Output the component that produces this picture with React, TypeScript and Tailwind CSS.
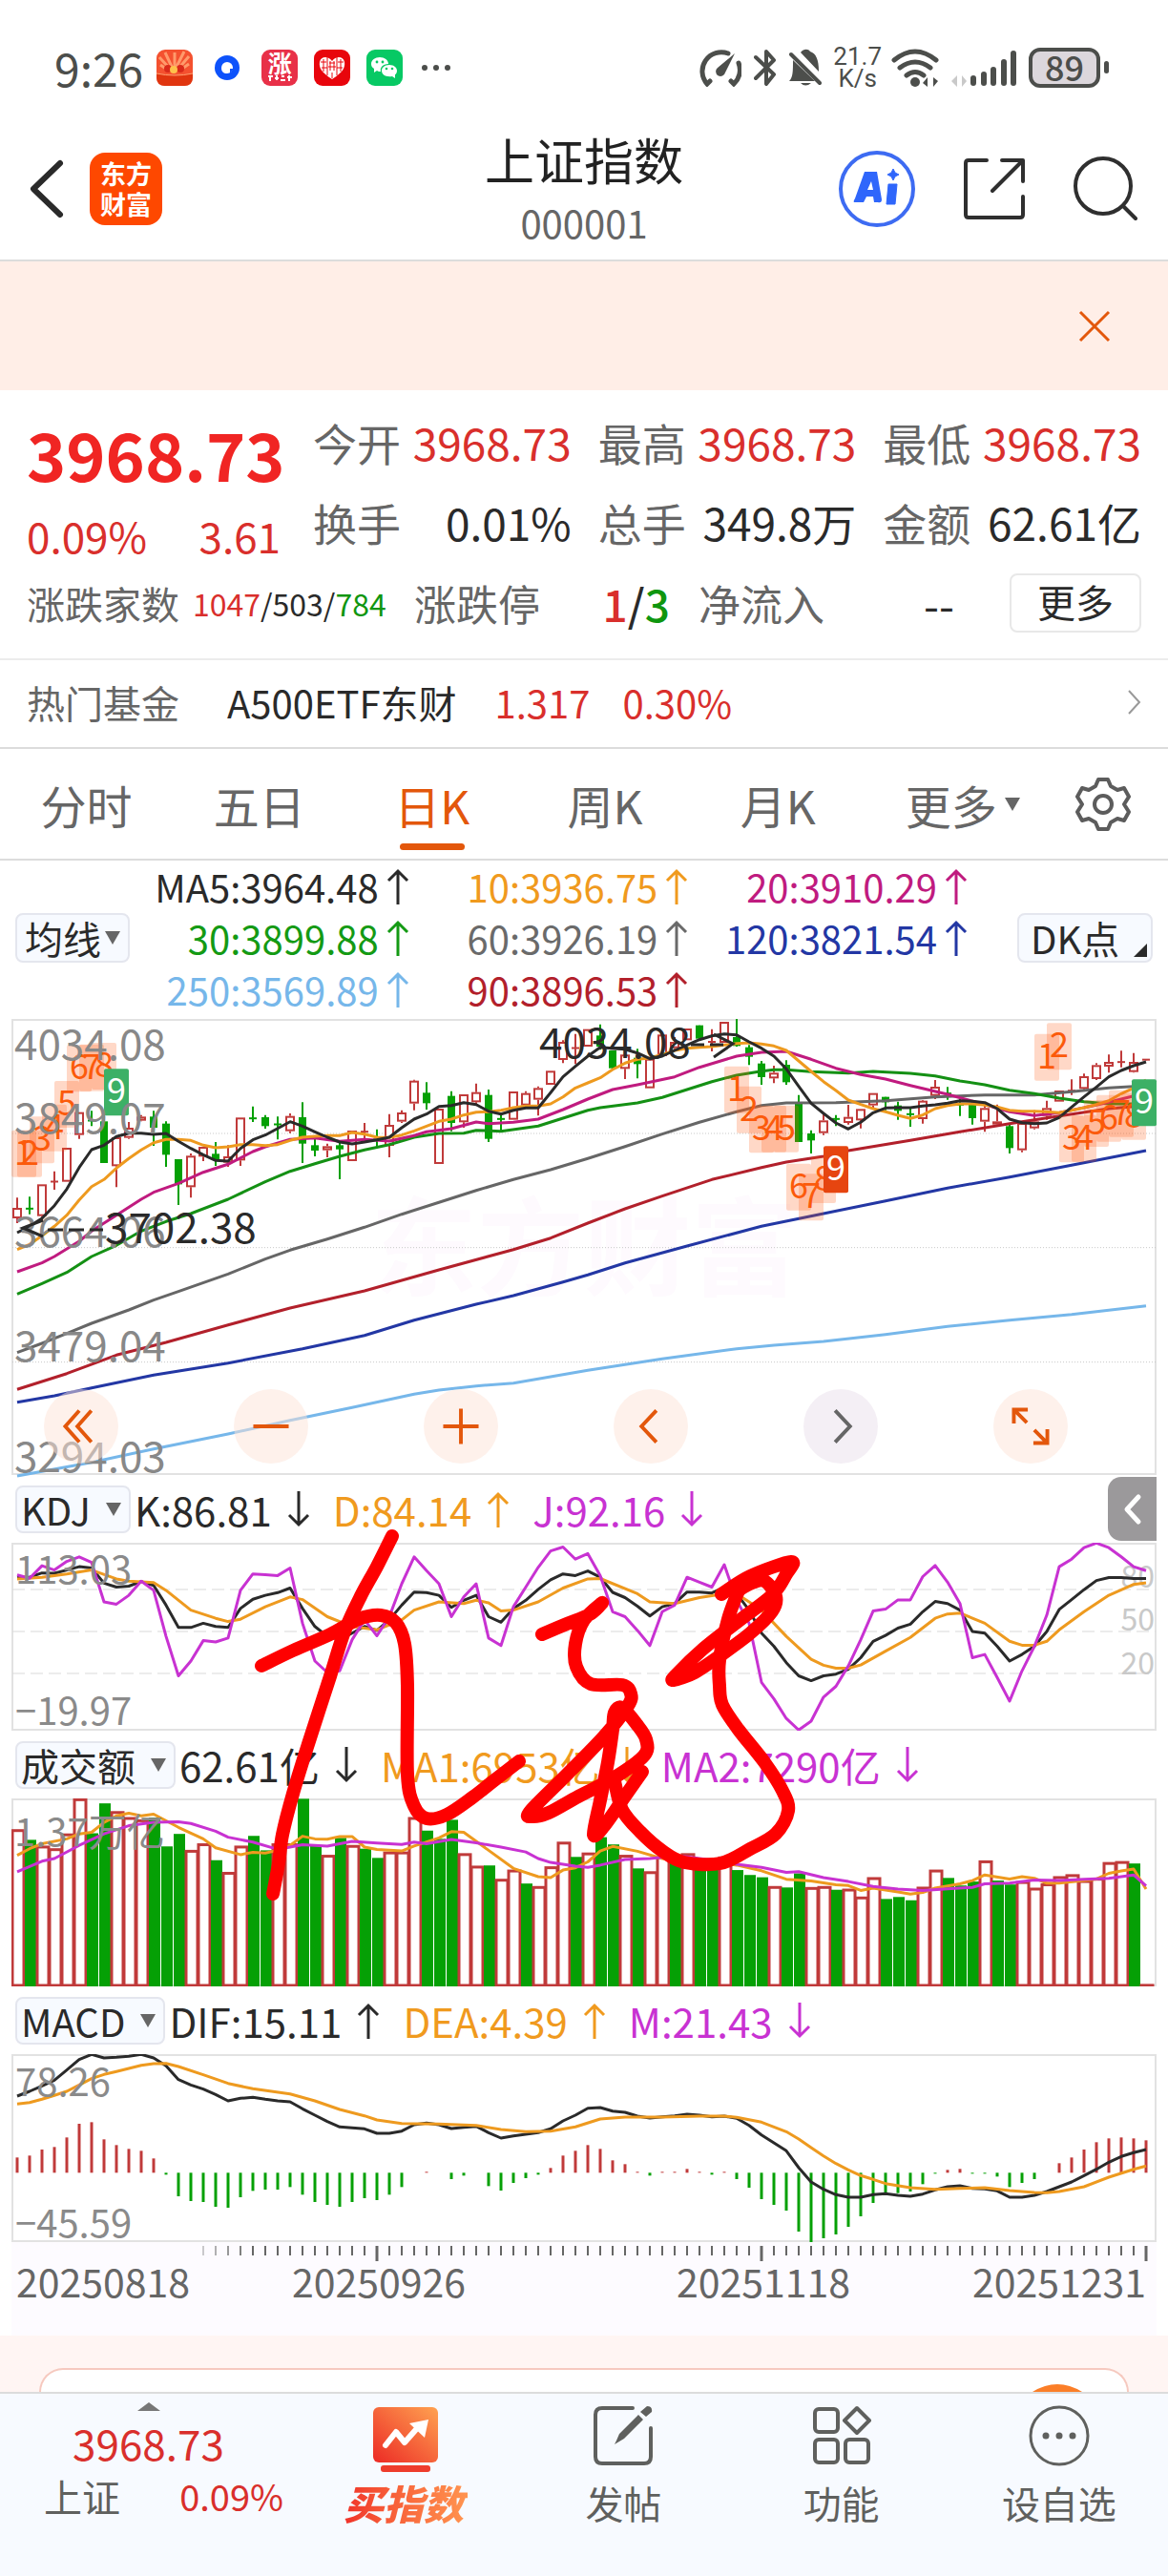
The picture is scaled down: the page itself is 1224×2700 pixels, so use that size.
import React from "react";

type Pt = [number, number];
type Series = number[];

const UP = "#c03a3a";
const DOWN = "#05a005";
const INK = "#2a2a2a";
const ORANGE = "#ee9a1f";
const VIOLET = "#c832d2";

const xAt = (i: number) => 18 + 13 * i;

// Sparse series: index, level, index, level, ...
const pathOf = (s: Series, y: (v: number) => number) => {
  let d = "";
  for (let k = 0; k < s.length; k += 2) d += (k ? "L" : "M") + xAt(s[k]) + " " + y(s[k + 1]).toFixed(1);
  return d;
};
// Dense series: one level for each trading day
const densePath = (s: Series, y: (v: number) => number) =>
  s.map((v, i) => (i ? "L" : "M") + xAt(i) + " " + y(v).toFixed(1)).join("");

const smooth = (p: Pt[]) => {
  let d = `M${p[0][0]} ${p[0][1]}`;
  for (let i = 0; i < p.length - 1; i++) {
    const a = p[Math.max(0, i - 1)], b = p[i], c = p[i + 1], e = p[Math.min(p.length - 1, i + 2)];
    d += `C${b[0] + (c[0] - a[0]) / 6} ${b[1] + (c[1] - a[1]) / 6} ${c[0] - (e[0] - b[0]) / 6} ${c[1] - (e[1] - b[1]) / 6} ${c[0]} ${c[1]}`;
  }
  return d;
};

// [rising, body top, body bottom, high, low]
const candles: [number, number, number, number, number][] = [
  [1, 617, 650, 585, 665], [0, 617, 622, 582, 637], [1, 543, 643, 543, 660], [1, 532, 537, 502, 560], [1, 428, 535, 428, 535],
  [1, 316, 388, 316, 400], [0, 340, 345, 312, 360], [0, 345, 476, 310, 476], [1, 395, 486, 395, 552], [1, 365, 397, 347, 400],
  [1, 330, 343, 325, 345], [0, 330, 365, 312, 422], [0, 352, 450, 345, 488], [0, 464, 543, 464, 608], [1, 453, 552, 446, 585],
  [1, 425, 456, 425, 470], [0, 447, 465, 410, 485], [1, 455, 475, 420, 488], [1, 333, 468, 333, 485], [0, 333, 338, 298, 347],
  [0, 332, 360, 325, 368], [0, 352, 357, 330, 402], [1, 328, 376, 320, 382], [0, 332, 415, 285, 476], [0, 420, 437, 400, 455],
  [1, 423, 436, 415, 458], [0, 420, 433, 410, 527], [1, 374, 470, 374, 470], [1, 375, 380, 350, 405], [0, 400, 405, 370, 425],
  [1, 356, 422, 322, 458], [1, 317, 346, 310, 350], [1, 217, 289, 214, 310], [0, 255, 288, 222, 308], [1, 305, 479, 305, 479],
  [0, 265, 350, 250, 376], [1, 260, 348, 260, 365], [1, 253, 285, 226, 295], [0, 262, 400, 245, 410], [0, 335, 340, 320, 380],
  [1, 251, 340, 251, 340], [1, 256, 295, 250, 305], [1, 240, 277, 235, 327], [1, 186, 230, 186, 230], [1, 95, 152, 90, 162],
  [1, 112, 117, 70, 165], [1, 55, 110, 55, 110], [0, 75, 110, 40, 120], [0, 122, 178, 122, 178], [1, 135, 180, 120, 212],
  [0, 145, 165, 117, 210], [1, 148, 241, 148, 241], [1, 72, 140, 72, 140], [1, 95, 115, 80, 125], [1, 53, 90, 53, 90],
  [0, 43, 85, 43, 85], [1, 92, 98, 55, 125], [1, 32, 98, 32, 98], [0, 80, 108, 23, 110], [0, 112, 142, 105, 168],
  [0, 163, 206, 155, 230], [1, 192, 210, 170, 225], [0, 167, 222, 153, 230], [0, 290, 410, 262, 410], [0, 383, 405, 373, 446],
  [1, 342, 382, 322, 388], [0, 335, 340, 325, 360], [1, 331, 350, 293, 355], [1, 306, 342, 306, 367], [1, 256, 295, 256, 305],
  [0, 268, 285, 268, 310], [0, 295, 312, 283, 340], [0, 320, 325, 305, 362], [1, 280, 338, 278, 352], [1, 236, 265, 215, 275],
  [0, 255, 260, 237, 277], [0, 290, 295, 275, 328], [0, 292, 335, 285, 355], [1, 303, 346, 295, 378], [1, 345, 355, 292, 362],
  [0, 360, 429, 355, 446], [1, 350, 436, 350, 442], [1, 345, 367, 310, 370], [1, 303, 328, 280, 340], [1, 248, 283, 248, 283],
  [1, 246, 251, 213, 262], [1, 203, 243, 195, 250], [1, 168, 212, 162, 215], [1, 158, 173, 135, 192], [1, 156, 161, 123, 175],
  [1, 158, 190, 130, 192], [1, 149, 153, 149, 153],
];

const ma5 = [695, 675, 650, 610, 558, 490, 434, 420, 393, 382, 382, 386, 383, 408, 430, 450, 468, 470, 430, 403, 388, 367, 346, 360, 378, 395, 410, 416, 410, 403, 395, 365, 338, 322, 298, 295, 286, 292, 313, 322, 310, 303, 303, 255, 205, 172, 140, 112, 115, 118, 130, 148, 140, 122, 105, 88, 76, 70, 73, 95, 115, 140, 180, 235, 288, 320, 350, 369, 348, 318, 303, 302, 302, 297, 293, 288, 280, 282, 286, 305, 338, 349, 352, 350, 333, 300, 268, 237, 205, 185, 170, 158];
const ma10 = [748, 732, 705, 675, 640, 592, 550, 528, 492, 462, 435, 412, 402, 402, 405, 420, 428, 425, 418, 418, 421, 418, 405, 395, 392, 390, 390, 380, 385, 395, 396, 388, 375, 360, 345, 338, 325, 316, 315, 310, 302, 297, 297, 290, 268, 240, 224, 208, 182, 162, 150, 146, 135, 122, 115, 112, 110, 105, 100, 98, 102, 108, 122, 155, 188, 220, 248, 278, 292, 305, 315, 326, 336, 325, 305, 295, 290, 290, 294, 300, 310, 313, 313, 315, 318, 310, 302, 292, 280, 258, 240, 215];

const maLines: { color: string; data: Series }[] = [
  { color: "#76b7ea", data: [0, 1460, 6, 1417, 11, 1375, 17, 1328, 22, 1285, 27, 1245, 32, 1203, 34, 1190, 37, 1177, 40, 1168, 46, 1128, 52, 1092, 58, 1060, 61, 1049, 65, 1037, 70, 1015, 75, 990, 80, 970, 85, 952, 91, 925] },
  { color: "#2337a4", data: [0, 1228, 3, 1208, 6, 1183, 11, 1143, 17, 1105, 23, 1060, 28, 1018, 32, 970, 37, 920, 40, 893, 44, 850, 46, 828, 49, 790, 54, 737, 60, 675, 65, 635, 70, 595, 75, 555, 80, 520, 85, 483, 91, 437] },
  { color: "#b2202b", data: [0, 1188, 4, 1138, 8, 1080, 12, 1040, 17, 985, 22, 932, 28, 878, 34, 812, 40, 748, 43, 712, 46, 665, 49, 620, 52, 580, 56, 528, 60, 490, 62, 473, 65, 455, 67, 437, 72, 405, 76, 378, 80, 352, 84, 328, 88, 305, 91, 295] },
  { color: "#666", data: [0, 1072, 2, 1043, 4, 1012, 6, 980, 9, 938, 11, 907, 13, 880, 17, 825, 20, 778, 22, 750, 25, 715, 28, 678, 31, 637, 34, 600, 37, 562, 40, 528, 43, 497, 46, 462, 49, 424, 52, 385, 55, 348, 58, 315, 60, 295, 62, 287, 66, 286, 70, 280, 74, 268, 78, 262, 82, 262, 85, 252, 88, 240, 91, 233] },
  { color: "#149014", data: [0, 888, 2, 855, 4, 820, 6, 770, 8, 735, 10, 690, 12, 660, 14, 635, 17, 590, 20, 535, 22, 502, 24, 478, 26, 455, 28, 435, 30, 418, 32, 395, 34, 383, 36, 382, 37, 373, 39, 376, 42, 360, 44, 335, 46, 310, 47, 302, 50, 287, 52, 270, 54, 245, 56, 220, 58, 200, 60, 187, 61, 183, 62, 183, 64, 189, 67, 193, 69, 188, 72, 194, 74, 202, 76, 218, 78, 230, 80, 247, 82, 258, 84, 272, 86, 283, 88, 290, 91, 290] },
  { color: "#c01b7f", data: [0, 818, 2, 790, 3, 770, 5, 722, 6, 690, 8, 640, 10, 590, 11, 568, 13, 540, 15, 505, 17, 480, 19, 440, 20, 425, 22, 402, 24, 397, 26, 408, 28, 402, 30, 407, 32, 390, 33, 378, 35, 368, 37, 347, 38, 352, 40, 348, 42, 338, 44, 308, 46, 275, 48, 245, 50, 230, 53, 205, 55, 175, 58, 140, 60, 128, 62, 125, 64, 150, 66, 178, 68, 198, 70, 212, 72, 232, 75, 260, 78, 292, 80, 315, 82, 327, 84, 318, 86, 302, 88, 285, 90, 265, 91, 258] },
];

// [day, digit, top level, kind]
const marks: [number, string, number, string][] = [
  [0, "1", 373, "n"], [1, "2", 373, "n"], [2, "3", 330, "n"], [3, "4", 292, "n"], [4, "5", 218, "n"], [5, "6", 105, "n"], [6, "7", 103, "n"], [7, "8", 98, "n"], [8, "9", 180, "g"],
  [58, "1", 172, "n"], [59, "2", 235, "n"], [60, "3", 297, "n"], [61, "4", 295, "n"], [62, "5", 295, "n"], [63, "6", 478, "n"], [64, "7", 510, "n"], [65, "8", 455, "n"], [66, "9", 423, "r"],
  [83, "1", 70, "n"], [84, "2", 36, "n"], [85, "3", 327, "n"], [86, "4", 325, "n"], [87, "5", 278, "n"], [88, "6", 262, "n"], [89, "7", 247, "n"], [90, "8", 256, "n"], [91, "9", 213, "g"],
];

const kLine = [300, 300, 287, 288, 278, 268, 272, 318, 330, 327, 313, 325, 385, 453, 453, 440, 450, 453, 395, 367, 355, 347, 333, 395, 450, 480, 490, 470, 450, 462, 430, 385, 345, 347, 355, 392, 370, 355, 420, 437, 395, 370, 337, 308, 290, 295, 281, 300, 346, 362, 388, 418, 390, 380, 345, 345, 348, 330, 350, 400, 470, 510, 560, 600, 615, 600, 595, 580, 545, 495, 477, 455, 443, 405, 374, 380, 400, 465, 470, 510, 555, 535, 510, 465, 398, 368, 338, 310, 301, 301, 304, 304];
const dLine = [0, 305, 2, 300, 4, 290, 6, 278, 8, 305, 9, 312, 11, 316, 12, 340, 14, 400, 16, 425, 17, 435, 18, 428, 20, 390, 22, 360, 23, 368, 25, 420, 27, 450, 29, 460, 30, 445, 31, 430, 32, 400, 34, 375, 36, 380, 37, 370, 38, 378, 39, 403, 40, 400, 42, 375, 44, 333, 46, 305, 47, 304, 50, 350, 51, 375, 53, 380, 55, 362, 57, 350, 58, 350, 60, 400, 62, 480, 64, 550, 65, 568, 66, 577, 67, 577, 68, 567, 70, 525, 72, 483, 74, 425, 75, 412, 76, 409, 78, 440, 80, 495, 81, 507, 82, 507, 83, 495, 84, 460, 86, 405, 88, 355, 90, 322, 91, 317];
const jLine = [293, 303, 265, 278, 252, 238, 255, 375, 382, 355, 312, 340, 480, 600, 555, 493, 497, 485, 340, 290, 292, 295, 272, 440, 555, 590, 585, 490, 430, 478, 420, 320, 238, 280, 320, 420, 360, 320, 485, 508, 390, 330, 270, 220, 208, 245, 228, 295, 405, 420, 462, 508, 405, 385, 300, 315, 330, 262, 370, 440, 620, 670, 730, 765, 738, 665, 632, 570, 490, 403, 397, 369, 369, 298, 264, 315, 380, 545, 535, 605, 677, 585, 510, 415, 268, 245, 210, 196, 210, 238, 268, 280];

// Negative levels are falling days
const volume = [1067, -1098, 1117, 1125, 1080, 973, -1078, -987, 1012, 1030, 1037, -1030, -1118, -1080, 1130, 1110, -1160, 1197, 1117, -1086, -1130, 1110, 1110, -973, -1115, 1145, -1092, 1115, -1125, -1153, 1135, 1135, 1030, -1070, -1095, -1037, 1140, 1178, -1176, 1218, 1190, -1231, 1240, 1180, 1105, -1150, 1138, -1090, -1112, 1145, -1185, 1195, 1150, -1165, 1140, -1180, -1180, 1150, -1190, -1205, -1212, 1240, -1243, -1200, 1243, 1240, -1250, 1248, 1272, 1213, -1278, -1272, -1282, 1242, 1190, -1214, -1237, -1225, 1162, -1222, -1234, 1225, 1245, 1232, 1210, 1204, 1222, 1215, 1167, 1164, -1170, 1538];
const volMa1 = [0, 1145, 1, 1125, 2, 1110, 4, 1095, 5, 1080, 6, 1075, 7, 1045, 8, 1025, 9, 1017, 10, 1025, 11, 1020, 13, 1060, 15, 1095, 16, 1122, 18, 1143, 19, 1136, 20, 1138, 21, 1130, 22, 1115, 23, 1087, 24, 1095, 25, 1096, 26, 1088, 27, 1088, 28, 1120, 29, 1127, 31, 1132, 32, 1117, 34, 1092, 35, 1073, 36, 1075, 38, 1130, 40, 1185, 42, 1210, 43, 1213, 44, 1190, 45, 1183, 46, 1165, 47, 1132, 48, 1118, 50, 1133, 52, 1155, 54, 1165, 56, 1165, 58, 1175, 60, 1192, 62, 1218, 64, 1223, 66, 1235, 67, 1237, 68, 1252, 69, 1245, 71, 1257, 72, 1263, 73, 1258, 74, 1245, 76, 1232, 77, 1222, 78, 1205, 80, 1217, 81, 1210, 82, 1215, 83, 1230, 84, 1230, 86, 1222, 87, 1217, 88, 1200, 89, 1193, 90, 1187, 91, 1248];
const volMa2 = [0, 1195, 2, 1163, 3, 1155, 5, 1115, 7, 1080, 9, 1055, 11, 1045, 13, 1043, 14, 1048, 16, 1072, 17, 1090, 19, 1105, 21, 1127, 23, 1113, 25, 1117, 27, 1103, 29, 1108, 31, 1112, 32, 1105, 33, 1110, 35, 1097, 37, 1107, 39, 1120, 41, 1135, 42, 1155, 43, 1167, 45, 1178, 46, 1182, 47, 1175, 49, 1158, 51, 1155, 53, 1147, 54, 1150, 56, 1160, 58, 1172, 60, 1182, 62, 1197, 63, 1195, 65, 1213, 67, 1225, 69, 1240, 71, 1248, 73, 1252, 75, 1247, 77, 1243, 78, 1232, 80, 1230, 82, 1220, 84, 1222, 86, 1218, 88, 1215, 90, 1205, 91, 1238];

const dif = [350, 335, 318, 300, 268, 235, 219, 230, 228, 225, 219, 230, 255, 298, 315, 328, 345, 365, 357, 354, 360, 365, 368, 390, 410, 430, 447, 450, 453, 467, 467, 460, 440, 435, 440, 452, 448, 445, 465, 482, 475, 470, 465, 453, 428, 410, 388, 386, 397, 401, 413, 419, 415, 412, 407, 410, 415, 413, 420, 442, 472, 497, 522, 575, 620, 643, 660, 668, 668, 660, 657, 662, 665, 658, 645, 635, 632, 640, 642, 648, 668, 668, 662, 650, 635, 620, 600, 580, 558, 540, 528, 518];
const dea = [0, 375, 1, 370, 2, 360, 3, 348, 4, 335, 5, 315, 6, 295, 7, 282, 8, 273, 9, 263, 10, 253, 11, 248, 12, 247, 13, 257, 15, 283, 17, 310, 19, 327, 22, 343, 24, 365, 26, 392, 28, 412, 29, 425, 31, 436, 34, 438, 37, 442, 39, 455, 41, 462, 43, 460, 45, 447, 47, 422, 49, 416, 52, 416, 55, 413, 57, 413, 58, 417, 60, 432, 62, 462, 63, 485, 64, 512, 65, 538, 66, 562, 67, 582, 68, 600, 69, 612, 70, 625, 72, 638, 74, 643, 76, 640, 78, 638, 80, 647, 82, 653, 83, 654, 84, 650, 86, 635, 88, 605, 90, 580, 91, 570];
const hist = [543, 537, 518, 510, 480, 437, 432, 486, 504, 516, 522, 546, 597, 665, 680, 683, 698, 701, 668, 648, 644, 644, 636, 660, 683, 692, 698, 683, 671, 677, 660, 636, 591, 588, 591, 611, 600, 591, 633, 647, 623, 608, 597, 576, 537, 522, 504, 516, 552, 564, 588, 600, 588, 588, 579, 588, 597, 588, 611, 638, 674, 692, 710, 776, 810, 797, 785, 761, 728, 686, 660, 655, 650, 627, 594, 582, 579, 594, 594, 603, 636, 623, 611, 591, 561, 543, 518, 495, 483, 480, 483, 489];

const strokes: Pt[][] = [
  [[411, 1610], [395, 1642], [378, 1673], [361, 1710], [346, 1757], [323, 1828], [307, 1880], [296, 1923], [292, 1953], [286, 1985]],
  [[274, 1746], [307, 1730], [346, 1713], [376, 1697], [399, 1693], [415, 1701], [424, 1723], [427, 1767], [427, 1860], [434, 1893], [447, 1906], [468, 1902], [495, 1884], [518, 1866], [544, 1846]],
  [[568, 1713], [594, 1702], [618, 1692], [631, 1680], [612, 1698], [603, 1723], [604, 1747], [619, 1765], [652, 1766], [661, 1775], [658, 1788], [633, 1820], [594, 1860], [556, 1898], [557, 1904], [575, 1900], [606, 1883], [644, 1863], [675, 1840], [677, 1823], [667, 1807], [652, 1790], [644, 1795], [642, 1813], [637, 1847], [629, 1887], [622, 1923], [633, 1914], [652, 1887], [673, 1857]],
  [[644, 1867], [652, 1897], [671, 1920], [694, 1940], [717, 1952], [755, 1953], [786, 1938], [813, 1922], [826, 1898], [820, 1877], [801, 1847], [774, 1813], [757, 1787], [754, 1767], [754, 1740], [763, 1697], [774, 1667]],
  [[756, 1671], [786, 1652], [829, 1637], [824, 1650], [809, 1672], [774, 1699], [736, 1729], [709, 1755], [706, 1761], [728, 1753], [755, 1735], [786, 1712], [809, 1689], [813, 1673], [801, 1657], [786, 1660], [774, 1667]],
];

const Frame = ({ h }: { h: number }) => <rect x="13" y="1" width="1198" height={h - 2} fill="none" stroke="#e2e2e2" strokeWidth="2" />;

function PriceChart() {
  const y = (v: number) => (v - 23) / 3;
  return (
    <svg viewBox="12 0 1200 478" className="block w-full overflow-visible" role="img" aria-label="日K">
      <Frame h={478} />
      <text x="388" y="282" fontSize="112" fontWeight="700" fill="#fefafe">东方财富</text>
      {[383, 742, 1102].map((v) => (
        <line key={v} x1="13" x2="1211" y1={y(v)} y2={y(v)} stroke="#c8c8c8" strokeDasharray="1 2" />
      ))}
      {candles.map(([up, t, b, hi, lo], i) => {
        const x = xAt(i);
        const flat = b - t < 7;
        const c = up ? UP : DOWN;
        return (
          <g key={i} stroke={c} strokeWidth="2">
            <line x1={x} x2={x} y1={y(hi)} y2={up && !flat ? y(t) : y(lo)} />
            {up && !flat && <line x1={x} x2={x} y1={y(b)} y2={y(lo)} />}
            {flat ? (
              <line x1={x - 4} x2={x + 4} y1={y((t + b) / 2)} y2={y((t + b) / 2)} />
            ) : up ? (
              <rect x={x - 4} y={y(t) + 1} width="8" height={Math.max(1, (b - t) / 3 - 2)} fill="#fff" />
            ) : (
              <rect x={x - 3} y={y(t) + 1} width="6" height={(b - t) / 3 - 2} fill={c} />
            )}
          </g>
        );
      })}
      {maLines.map((l) => (
        <path key={l.color} d={pathOf(l.data, y)} fill="none" stroke={l.color} strokeWidth="3" strokeLinejoin="round" />
      ))}
      <path d={densePath(ma10, y)} fill="none" stroke={ORANGE} strokeWidth="3" strokeLinejoin="round" />
      <path d={densePath(ma5, y)} fill="none" stroke={INK} strokeWidth="3" strokeLinejoin="round" />
      {marks.map(([i, n, t, kind]) => {
        const x = Math.min(Math.max(xAt(i), 25), 1199);
        return (
          <g key={i}>
            <rect x={x - 13} y={y(t)} width="26" height="49" rx="2" fill={kind === "g" ? "#3cb066" : kind === "r" ? "#e64510" : "#ff5a14"} fillOpacity={kind === "n" ? 0.24 : 1} />
            <text x={x} y={y(t) + 36} textAnchor="middle" fontSize="36" fill={kind === "n" ? "#fb5a0a" : "#fff"}>{n}</text>
          </g>
        );
      })}
      <g fontSize="44" fill="#888">
        <text x="15" y="43">4034.08</text>
        <text x="15" y="120">3849.07</text>
        <text x="15" y="239">3664.06</text>
        <text x="15" y="359">3479.04</text>
        <text x="15" y="475">3294.03</text>
      </g>
      <g fontSize="44" fill={INK}>
        <text x="110" y="235">3702.38</text>
        <text x="565" y="41">4034.08</text>
      </g>
      <g fill="none" stroke={INK} strokeWidth="3">
        <path d="M45 211 24 219 45 228M50 221H66M72 221H88M94 221H108" />
        <path d="M724 27H738M744 27H758M748 16 768 26 748 40" />
      </g>
    </svg>
  );
}

function KdjChart() {
  const y = (v: number) => (v - 195) / 2.904;
  return (
    <svg viewBox="12 0 1200 197" className="block w-full" role="img" aria-label="KDJ">
      <Frame h={197} />
      {[49, 93, 137].map((v) => (
        <line key={v} x1="13" x2="1211" y1={v} y2={v} stroke="#d9d9d9" strokeWidth="1" strokeDasharray="13 6" />
      ))}
      <g fontSize="32" fill="#c9c9c9" textAnchor="end">
        <text x="1210" y="47">80</text>
        <text x="1210" y="92">50</text>
        <text x="1210" y="138">20</text>
      </g>
      <g fill="none" strokeWidth="3" strokeLinejoin="round">
        <path d={densePath(kLine, y)} stroke={INK} />
        <path d={pathOf(dLine, y)} stroke={ORANGE} />
        <path d={densePath(jLine, y)} stroke={VIOLET} />
      </g>
      <g fontSize="40" fill="#8a8a8a">
        <text x="16" y="43">113.03</text>
        <text x="16" y="191">−19.97</text>
      </g>
    </svg>
  );
}

function VolumeChart() {
  const y = (v: number) => (v - 972) / 2.904;
  return (
    <svg viewBox="12 0 1200 197" className="block w-full" role="img" aria-label="成交额">
      <Frame h={197} />
      {volume.map((v, i) => {
        const top = y(Math.abs(v));
        return v > 0 ? (
          <rect key={i} x={xAt(i) - 5} y={top + 1} width="12" height={Math.max(1, 195 - top)} fill="#fff" stroke={UP} strokeWidth="3" />
        ) : (
          <rect key={i} x={xAt(i) - 5} y={top} width="12" height={197 - top} fill={DOWN} />
        );
      })}
      <g fill="none" strokeWidth="3" strokeLinejoin="round">
        <path d={pathOf(volMa1, y)} stroke={ORANGE} />
        <path d={pathOf(volMa2, y)} stroke={VIOLET} />
      </g>
      <text x="15" y="50" fontSize="40" fill="#8a8a8a">1.37万亿</text>
    </svg>
  );
}

function MacdChart() {
  const y = (v: number) => (v - 218) / 3;
  return (
    <svg viewBox="12 0 1200 197" className="block w-full" role="img" aria-label="MACD">
      <Frame h={197} />
      {hist.map((v, i) => (
        <line key={i} x1={xAt(i)} x2={xAt(i)} y1={y(591)} y2={y(v)} stroke={v < 591 ? UP : DOWN} strokeWidth="3" />
      ))}
      <g fill="none" strokeWidth="3" strokeLinejoin="round">
        <path d={densePath(dif, y)} stroke={INK} />
        <path d={pathOf(dea, y)} stroke={ORANGE} />
      </g>
      <g fontSize="40" fill="#8a8a8a">
        <text x="16" y="44">78.26</text>
        <text x="16" y="192">−45.59</text>
      </g>
    </svg>
  );
}

function DateAxis() {
  const ticks = Array.from({ length: 77 }, (_, k) => k + 15);
  return (
    <svg viewBox="12 0 1200 98" className="block w-full" role="img" aria-label="日期">
      {ticks.map((i) => {
        const major = i === 29 || i === 60 || i === 91;
        return <line key={i} x1={xAt(i)} x2={xAt(i)} y1="4" y2={major ? 20 : 14} stroke="#666" strokeOpacity={Math.min(1, (i - 13) / 6)} strokeWidth={major ? 3 : 2} />;
      })}
      <g fontSize="41" fill="#666">
        <text x="17" y="58">20250818</text>
        <text x="397" y="58" textAnchor="middle">20250926</text>
        <text x="800" y="58" textAnchor="middle">20251118</text>
        <text x="1201" y="58" textAnchor="end">20251231</text>
      </g>
    </svg>
  );
}

const Arrow = ({ down }: { down?: boolean }) => (
  <svg viewBox="0 0 24 38" className="h-[38px] w-6 shrink-0" fill="none" stroke="currentColor" strokeWidth="3">
    <path d={down ? "M12 0V35M2 25 12 35 22 25" : "M12 38V3M2 13 12 3 22 13"} />
  </svg>
);

const Caret = () => (
  <svg viewBox="0 0 16 14" className="h-[14px] w-4 shrink-0" fill="#666">
    <path d="M0 0H16L8 14Z" />
  </svg>
);

function Reading({ text, color, down }: { text: string; color: string; down?: boolean }) {
  return (
    <span className={`flex items-center gap-4 whitespace-nowrap ${color}`}>
      {text}
      <Arrow down={down} />
    </span>
  );
}

function IndicatorHead({ name, children }: { name: string; children: React.ReactNode }) {
  return (
    <div className="flex h-[71px] items-center pl-4 text-[42px] leading-none">
      <button className="mr-1 flex h-[50px] shrink-0 items-center gap-4 rounded-lg border-2 border-[#e4e6ee] bg-[#f7faff] px-1 pr-2 text-[40px] leading-none whitespace-nowrap text-[#2a2a2a]">
        {name}
        <Caret />
      </button>
      <div className="flex items-center gap-6">{children}</div>
    </div>
  );
}

const legend: [string, string][] = [
  ["MA5:3964.48", "text-[#2a2a2a]"],
  ["10:3936.75", "text-[#f09a1e]"],
  ["20:3910.29", "text-[#c01b7f]"],
  ["30:3899.88", "text-[#149a14]"],
  ["60:3926.19", "text-[#6a6a6a]"],
  ["120:3821.54", "text-[#2337a4]"],
  ["250:3569.89", "text-[#76b7ea]"],
  ["90:3896.53", "text-[#b2202b]"],
];

function Stat({ label, value, red }: { label: string; value: string; red?: boolean }) {
  return (
    <div className="flex justify-between whitespace-nowrap">
      <dt className="text-[#666]">{label}</dt>
      <dd className={red ? "text-[#d92f2c]" : "text-[#2a2a2a]"}>{value}</dd>
    </div>
  );
}

function StatusBar() {
  return (
    <div className="flex h-[135px] items-center justify-between pt-[6px] pr-[62px] pl-[57px] text-[#4c4e4b]">
      <div className="flex items-center">
        <span className="mr-[14px] pb-[2px] text-[48px] leading-none">9:26</span>
        <div className="flex items-center gap-[17px]">
          <svg viewBox="0 0 38 38" className="size-[38px]">
            <rect width="38" height="38" rx="9" fill="#f4512f" />
            <path d="M3 8 14 20M19 3V18M34 7 23 20M9 3 16 18M29 2 21 18M4 16 13 22M34 15 24 22" stroke="#ff9a6b" strokeWidth="3" />
            <circle cx="12" cy="20" r="4" fill="#d92a1a" />
            <circle cx="25" cy="20" r="4" fill="#d92a1a" />
            <circle cx="18" cy="21" r="4" fill="#fec14b" />
            <path d="M0 25Q19 29 38 25V29Q38 38 29 38H9Q0 38 0 29Z" fill="#e0350f" />
            <path d="M0 25Q19 29 38 25" fill="none" stroke="#ffa070" strokeWidth="1" />
          </svg>
          <svg viewBox="0 0 38 38" className="size-[38px]">
            <circle cx="19" cy="19" r="13" fill="#0d52fb" />
            <path d="M19 13a6 6 0 1 1 0 12c-4 0-6-2-6-6a6 6 0 0 1 6-6Z" fill="#fff" />
            <path d="M26 20h-4v5z" fill="#0d52fb" />
          </svg>
          <span className="flex size-[38px] flex-col items-center rounded-[9px] bg-[#e83048] text-white">
            <b className="text-[25px] leading-[27px]">涨</b>
            <svg viewBox="0 0 26 6" className="h-[6px] w-[26px]" stroke="#fff" strokeWidth="2">
              <path d="M1 1H6M3 0V6M8 3H12M10 0V5M15 1H18M14 5H19M21 2H26M23 0V6" />
            </svg>
          </span>
          <svg viewBox="0 0 38 38" className="size-[38px]">
            <rect width="38" height="38" rx="9" fill="#e8050c" />
            <path d="M19 31C8 24 5 19 6 13c1-6 9-7 13-1 4-6 12-5 13 1 1 6-2 11-13 18Z" fill="#fff" />
            <path d="M10 10v13M14 8v19M24 8v19M28 10v13M7 13h6M25 13h6M8 19h6M24 19h6M16 14h6M15 18h8M17 12v10M21 12v10M19 24v6" stroke="#e8050c" strokeWidth="1" />
          </svg>
          <svg viewBox="0 0 38 38" className="size-[38px]">
            <rect width="38" height="38" rx="9" fill="#07c964" />
            <path d="M14 8c5 0 9 3 9 7-6 0-9 4-8 8-1 0-3 0-4-1l-3 2v-4c-2-1-3-3-3-5 0-4 4-7 9-7Z" fill="#fff" />
            <path d="M24 16c5 0 8 3 8 6 0 2-1 4-2 4v4l-3-2c-7 1-11-2-11-6 0-3 3-6 8-6Z" fill="#fff" />
            <g fill="#07c964"><circle cx="11" cy="13" r="1.4" /><circle cx="17" cy="13" r="1.4" /><circle cx="21" cy="20" r="1.3" /><circle cx="27" cy="20" r="1.3" /></g>
          </svg>
        </div>
        <svg viewBox="0 0 30 6" className="ml-5 h-[6px] w-[30px]" fill="currentColor">
          <circle cx="3" cy="3" r="3" /><circle cx="15" cy="3" r="3" /><circle cx="27" cy="3" r="3" />
        </svg>
      </div>
      <div className="flex items-center">
        <svg viewBox="0 0 44 40" className="mr-[13px] h-10 w-11" fill="none" stroke="currentColor" strokeWidth="5" strokeLinecap="round">
          <path d="M30 5A20 20 0 0 0 8 37L11 34M41 15A20 20 0 0 1 36 37L33 34" />
          <path d="M37 5 27 25a5 5 0 1 1-8-5Z" fill="currentColor" stroke="none" />
        </svg>
        <svg viewBox="0 0 24 40" className="mr-[13px] h-10 w-6" fill="none" stroke="currentColor" strokeWidth="4" strokeLinejoin="round" strokeLinecap="round">
          <path d="M2 9 21 27 13 37V3L21 12 2 31" />
        </svg>
        <svg viewBox="0 0 34 40" className="mr-3 h-10 w-[34px]" fill="currentColor">
          <path d="M12 4C15 0 20 0 22 3 28 5 31 11 31 24ZM4 12 27 34H0C4 30 4 24 4 12ZM12 36H23Q17 41 12 36Z" />
          <path d="M2 6 32 36" stroke="currentColor" strokeWidth="4" strokeLinecap="round" />
        </svg>
        <span className="mr-[10px] text-center font-[Roboto,sans-serif] text-[26px] leading-[23px]">21.7<br />K/s</span>
        <svg viewBox="0 0 50 40" className="mr-[13px] h-10 w-[50px]" fill="none" stroke="currentColor" strokeWidth="5" strokeLinecap="round">
          <path d="M3 12Q25-6 47 12M9 20Q25 8 41 20M16 28Q25 21 34 28" />
          <circle cx="25" cy="35" r="5" fill="currentColor" stroke="none" />
          <path d="M38 30V40L33 36ZM44 30V40L49 34Z" fill="currentColor" stroke="none" />
        </svg>
        <svg viewBox="0 0 68 40" className="mr-[13px] h-10 w-[68px]" stroke="currentColor" strokeWidth="6" strokeLinecap="round">
          <path d="M23 31V36M34 27V36M44 22V36M55 14V36M65 5V36" />
          <path d="M6 28V40L0 34ZM11 28V40L16 34Z" fill="#c9c9c9" stroke="none" />
        </svg>
        <span className="flex h-[42px] w-[75px] items-center justify-center rounded-[12px] border-4 border-[#4c4e4b] bg-[#dcd7dc] pb-1 text-[36px] leading-none font-medium">89</span>
        <span className="ml-1 h-[13px] w-[5px] rounded-full bg-[#4c4e4b]" />
      </div>
    </div>
  );
}

function Header() {
  return (
    <header className="relative flex h-[139px] items-start justify-between border-b-2 border-[#dcdcdc] pr-[32px] pl-[28px]">
      <div className="flex items-center gap-6 pt-[25px]">
        <button aria-label="返回">
          <svg viewBox="0 0 42 64" className="h-16 w-[42px]" fill="none" stroke="#2a2a2a" strokeWidth="6" strokeLinecap="round" strokeLinejoin="round">
            <path d="M35 5 7 32 35 59" />
          </svg>
        </button>
        <a href="#home" className="flex size-[76px] flex-col items-center justify-center rounded-[16px] bg-[#fe4800] text-[27px] leading-[32px] font-bold text-white">
          <span>东方</span>
          <span>财富</span>
        </a>
      </div>
      <div className="pointer-events-none absolute inset-x-0 top-0 flex flex-col items-center">
        <h1 className="text-[52px] leading-[64px] text-[#222]">上证指数</h1>
        <p className="text-[40px] leading-[68px] text-[#666]">000001</p>
      </div>
      <div className="flex items-center gap-[48px] pt-[22px]">
        <button aria-label="Ai">
          <svg viewBox="0 0 82 82" className="size-[82px]">
            <circle cx="41" cy="41" r="38" fill="none" stroke="#3d6bf2" strokeWidth="4" />
            <path d="M28 23H41L46 52Q46 56 42 55H38L37 49H30L27 55H17Q16 54 18 51ZM35 33 31 42H37Z" fill="#2f66fb" fillRule="evenodd" />
            <path d="M53 36H62L60 57H51ZM58 20 60 24 64 26 60 28 58 32 56 28 52 26 56 24Z" fill="#2f66fb" stroke="#2f66fb" strokeLinejoin="round" />
          </svg>
        </button>
        <button aria-label="分享">
          <svg viewBox="0 0 68 68" className="size-[68px]" fill="none" stroke="#2f2f2f" strokeWidth="4" strokeLinecap="round" strokeLinejoin="round">
            <path d="M26 4H7Q4 4 4 7V61Q4 64 7 64H61Q64 64 64 61V42M42 4H64V26M63 5 32 36" />
          </svg>
        </button>
        <button aria-label="搜索">
          <svg viewBox="0 0 68 68" className="size-[68px]" fill="none" stroke="#2f2f2f" strokeWidth="4" strokeLinecap="round">
            <circle cx="32" cy="31" r="29" />
            <path d="M53 52 66 65" />
          </svg>
        </button>
      </div>
    </header>
  );
}

function Quote() {
  return (
    <section className="px-[28px] pt-[25px] pb-[15px]">
      <div className="flex gap-[30px]">
        <div className="w-[270px] shrink-0 text-[44px] leading-[56px] text-[#d92f2c]">
          <p className="text-[70px] leading-[82px] font-bold text-[#f02523]">3968.73</p>
          <p className="mt-[17px] flex justify-between pr-1">
            <span>0.09%</span>
            <span>3.61</span>
          </p>
        </div>
        <dl className="grid flex-1 grid-cols-3 content-start gap-x-[28px] gap-y-[26px] text-[46px] leading-[58px]">
          <Stat label="今开" value="3968.73" red />
          <Stat label="最高" value="3968.73" red />
          <Stat label="最低" value="3968.73" red />
          <Stat label="换手" value="0.01%" />
          <Stat label="总手" value="349.8万" />
          <Stat label="金额" value="62.61亿" />
        </dl>
      </div>
      <div className="flex h-[86px] items-center whitespace-nowrap text-[#2a2a2a]">
        <span className="mr-[14px] text-[40px] text-[#666]">涨跌家数</span>
        <span className="w-[232px] text-[32px]">
          <span className="text-[#d92f2c]">1047</span>/503/<span className="text-[#0f960f]">784</span>
        </span>
        <span className="text-[44px] text-[#666]">涨跌停</span>
        <span className="flex-1 pr-[30px] text-right text-[46px] font-medium">
          <span className="text-[#d92f2c]">1</span>/<span className="text-[#0f960f]">3</span>
        </span>
        <span className="text-[44px] text-[#666]">净流入</span>
        <span className="flex-1 pr-[58px] text-right text-[46px]">--</span>
        <button className="h-[62px] w-[138px] rounded-lg border-2 border-[#e8e8e8] pb-1 text-[40px] leading-none">更多</button>
      </div>
    </section>
  );
}

const tabs = ["分时", "五日", "日K", "周K", "月K"];

function Tabs() {
  return (
    <nav className="flex h-[117px] items-stretch border-b-2 border-[#dcdcdc] text-[48px] leading-none text-[#666]">
      {tabs.map((t) => (
        <button key={t} className={`relative w-[14.8%] ${t === "日K" ? "text-[#e3570b]" : ""}`}>
          {t}
          {t === "日K" && <span className="absolute bottom-[9px] left-1/2 h-[7px] w-[68px] -translate-x-1/2 rounded-full bg-[#e3570b]" />}
        </button>
      ))}
      <button className="flex flex-1 items-center justify-center gap-2">
        更多
        <Caret />
      </button>
      <button aria-label="设置" className="flex w-[112px] items-center justify-center pr-6">
        <svg viewBox="0 0 58 58" className="size-[58px]" fill="none" stroke="#5c5c5c" strokeWidth="4" strokeLinejoin="round">
          <path d="M24 3H34L37 10 44 14 51 12 56 21 51 29 56 37 51 46 44 44 37 48 34 55H24L21 48 14 44 7 46 2 37 7 29 2 21 7 12 14 14 21 10Z" />
          <circle cx="29" cy="29" r="9" />
        </svg>
      </button>
    </nav>
  );
}

const controls: { label: string; d: string; muted?: boolean }[] = [
  { label: "最左", d: "M38 23 23 40 38 57M51 23 36 40 51 57" },
  { label: "缩小", d: "M21 40H59" },
  { label: "放大", d: "M21 40H59M40 21V59" },
  { label: "左移", d: "M46 23 30 40 46 57" },
  { label: "右移", d: "M34 23 50 40 34 57", muted: true },
  { label: "全屏", d: "M37 22H22V37M23 23 36 36M58 43V58H43M57 57 44 44" },
];

function NavItem({ label, children }: { label: string; children: React.ReactNode }) {
  return (
    <a href="#nav" className="flex flex-1 flex-col items-center gap-[6px] pt-[10px] text-[40px] leading-[60px] text-[#5f605e]">
      {children}
      <span>{label}</span>
    </a>
  );
}

export default function App() {
  return (
    <div className="min-h-screen w-full overflow-hidden bg-white font-['Noto_Sans_CJK_SC','Noto_Sans',sans-serif]">
      <StatusBar />
      <Header />
      <div className="flex h-[135px] items-center justify-end bg-[#ffeee7] pr-[60px]">
        <button aria-label="关闭">
          <svg viewBox="0 0 34 34" className="size-[34px]" fill="none" stroke="#e3570b" strokeWidth="3">
            <path d="M2 2 32 32M32 2 2 32" />
          </svg>
        </button>
      </div>
      <Quote />
      <a href="#fund" className="flex h-[95px] items-center border-y-2 border-t-[#ececec] border-b-[#dcdcdc] px-[28px] pb-1 text-[40px] whitespace-nowrap text-[#2a2a2a]">
        <span className="w-[210px] text-[#666]">热门基金</span>
        <span className="mr-[40px]">A500ETF东财</span>
        <span className="mr-[34px] text-[#d92f2c]">1.317</span>
        <span className="flex-1 text-[#d92f2c]">0.30%</span>
        <svg viewBox="0 0 14 26" className="h-[26px] w-[14px]" fill="none" stroke="#999" strokeWidth="2">
          <path d="M1 1 12 13 1 25" />
        </svg>
      </a>
      <Tabs />

      <section className="flex items-center px-4 pb-[4px] text-[40px] leading-none">
        <button className="flex h-[52px] w-[120px] shrink-0 items-center justify-center gap-1 rounded-lg border-2 border-[#e4e6ee] bg-[#f7faff] whitespace-nowrap text-[#2a2a2a]">
          均线
          <Caret />
        </button>
        <ul className="mr-[52px] grid flex-1 grid-cols-3">
          {legend.map(([t, c]) => (
            <li key={t} className={`flex h-[54px] items-center justify-end gap-2 whitespace-nowrap ${c}`}>
              {t}
              <Arrow />
            </li>
          ))}
        </ul>
        <button className="flex h-[52px] w-[142px] shrink-0 items-center justify-between rounded-lg border-2 border-[#e4e6ee] bg-[#f7faff] pr-1 pl-3 whitespace-nowrap text-[#2a2a2a]">
          DK点
          <svg viewBox="0 0 14 14" className="mb-1 size-[14px] self-end" fill="#2a2a2a"><path d="M14 0V14H0Z" /></svg>
        </button>
      </section>

      <section className="relative mx-3">
        <PriceChart />
        <div className="absolute bottom-[12px] left-0 flex w-full justify-between pr-[93px] pl-[34px]">
          {controls.map((c) => (
            <button key={c.label} aria-label={c.label} className={`size-[78px] rounded-full ${c.muted ? "bg-[#ece4ef]/60" : "bg-[#fde3d8]/50"}`}>
              <svg viewBox="0 0 80 80" className="size-full" fill="none" stroke={c.muted ? "#666" : "#e3570b"} strokeWidth="4">
                <path d={c.d} />
              </svg>
            </button>
          ))}
        </div>
      </section>

      <section className="relative">
        <IndicatorHead name="KDJ">
          <Reading text="K:86.81" color="text-[#2a2a2a]" down />
          <Reading text="D:84.14" color="text-[#f09a1e]" />
          <Reading text="J:92.16" color="text-[#c832d2]" down />
        </IndicatorHead>
        <button aria-label="展开" className="absolute top-[2px] right-3 flex h-[67px] w-[51px] items-center justify-center rounded-l-[14px] bg-[#9b999b]">
          <svg viewBox="0 0 20 34" className="h-[34px] w-5" fill="none" stroke="#fff" strokeWidth="5" strokeLinecap="round" strokeLinejoin="round">
            <path d="M16 4 4 17 16 30" />
          </svg>
        </button>
        <div className="mx-3"><KdjChart /></div>
        <IndicatorHead name="成交额">
          <Reading text="62.61亿" color="text-[#2a2a2a]" down />
          <Reading text="MA1:6953亿" color="text-[#f09a1e]" down />
          <Reading text="MA2:7290亿" color="text-[#c832d2]" down />
        </IndicatorHead>
        <div className="mx-3"><VolumeChart /></div>
        <svg viewBox="0 1546 1224 536" className="pointer-events-none absolute top-0 left-0 w-full" fill="none" stroke="#fe0000" strokeWidth="14" strokeLinecap="round" strokeLinejoin="round">
          {strokes.map((s, i) => <path key={i} d={smooth(s)} />)}
        </svg>
      </section>

      <section>
        <IndicatorHead name="MACD">
          <Reading text="DIF:15.11" color="text-[#2a2a2a]" />
          <Reading text="DEA:4.39" color="text-[#f09a1e]" />
          <Reading text="M:21.43" color="text-[#c832d2]" down />
        </IndicatorHead>
        <div className="mx-3"><MacdChart /></div>
        <div className="mx-3 bg-[#fdfbff]"><DateAxis /></div>
      </section>

      <section className="bg-[#fff5f3] px-[41px] pt-[34px]">
        <div className="flex h-[25px] items-end justify-end overflow-hidden rounded-t-[26px] border-2 border-b-0 border-[#f6c9bf] bg-white pr-[47px]">
          <svg viewBox="0 0 52 8" className="h-2 w-[52px]" fill="#fb7e28"><path d="M0 8Q26-8 52 8Z" /></svg>
        </div>
      </section>

      <nav className="flex h-[193px] border-t-2 border-[#dcdcdc] bg-[#f7faff]">
        <button className="flex w-[311px] flex-col items-center pt-[9px] whitespace-nowrap">
          <svg viewBox="0 0 24 9" className="h-[9px] w-6" fill="#777"><path d="M12 0 24 9H0Z" /></svg>
          <span className="mt-[5px] text-[44px] leading-[56px] text-[#d92f2c]">3968.73</span>
          <span className="flex w-full justify-between pr-[14px] pl-[46px] text-[40px] leading-[56px] text-[#5f605e]">
            上证 <span className="text-[38px] text-[#d92f2c]">0.09%</span>
          </span>
        </button>
        <a href="#buy" className="flex flex-1 flex-col items-center gap-[2px] pt-[14px] text-[42px] leading-[60px] font-black italic">
          <svg viewBox="0 0 68 68" className="size-[68px]">
            <defs>
              <linearGradient id="buy" x1="0" y1="1" x2="1" y2="0"><stop stopColor="#ec2a25" /><stop offset="1" stopColor="#ffa251" /></linearGradient>
            </defs>
            <rect width="68" height="58" rx="6" fill="url(#buy)" />
            <rect x="8" y="61" width="52" height="7" rx="3" fill="#ee3c2c" />
            <path d="M13 40 24 26 33 37 48 20" fill="none" stroke="#fff" strokeWidth="6" strokeLinejoin="round" strokeLinecap="round" />
            <path d="M38 17 58 13 54 32Z" fill="#fff" />
          </svg>
          <span className="bg-linear-to-r from-[#f0302a] to-[#ff9450] bg-clip-text pr-1 text-transparent">买指数</span>
        </a>
        <NavItem label="发帖">
          <svg viewBox="0 0 68 68" className="size-[68px]" fill="none" stroke="#5f605e" strokeWidth="4" strokeLinecap="round">
            <path d="M44 5H12Q5 5 5 12V56Q5 63 12 63H56Q63 63 63 56V26" />
            <path d="M27 39 30 32 50 12 55 17 35 37 25 43ZM52 9 59 3Q65 3 64 9L58 14Z" fill="#5f605e" stroke="none" />
          </svg>
        </NavItem>
        <NavItem label="功能">
          <svg viewBox="0 0 68 68" className="size-[68px]" fill="none" stroke="#5f605e" strokeWidth="4" strokeLinejoin="round">
            <rect x="6" y="6" width="24" height="24" rx="4" /><rect x="6" y="38" width="24" height="24" rx="4" /><rect x="38" y="38" width="24" height="24" rx="4" />
            <path d="M50 5 63 18 50 31 37 18Z" />
          </svg>
        </NavItem>
        <NavItem label="设自选">
          <svg viewBox="0 0 68 68" className="size-[68px]" fill="none" stroke="#5f605e" strokeWidth="3">
            <circle cx="34" cy="34" r="30" />
            <g fill="#5f605e" stroke="none"><circle cx="20" cy="34" r="3.5" /><circle cx="34" cy="34" r="3.5" /><circle cx="48" cy="34" r="3.5" /></g>
          </svg>
        </NavItem>
      </nav>
    </div>
  );
}
